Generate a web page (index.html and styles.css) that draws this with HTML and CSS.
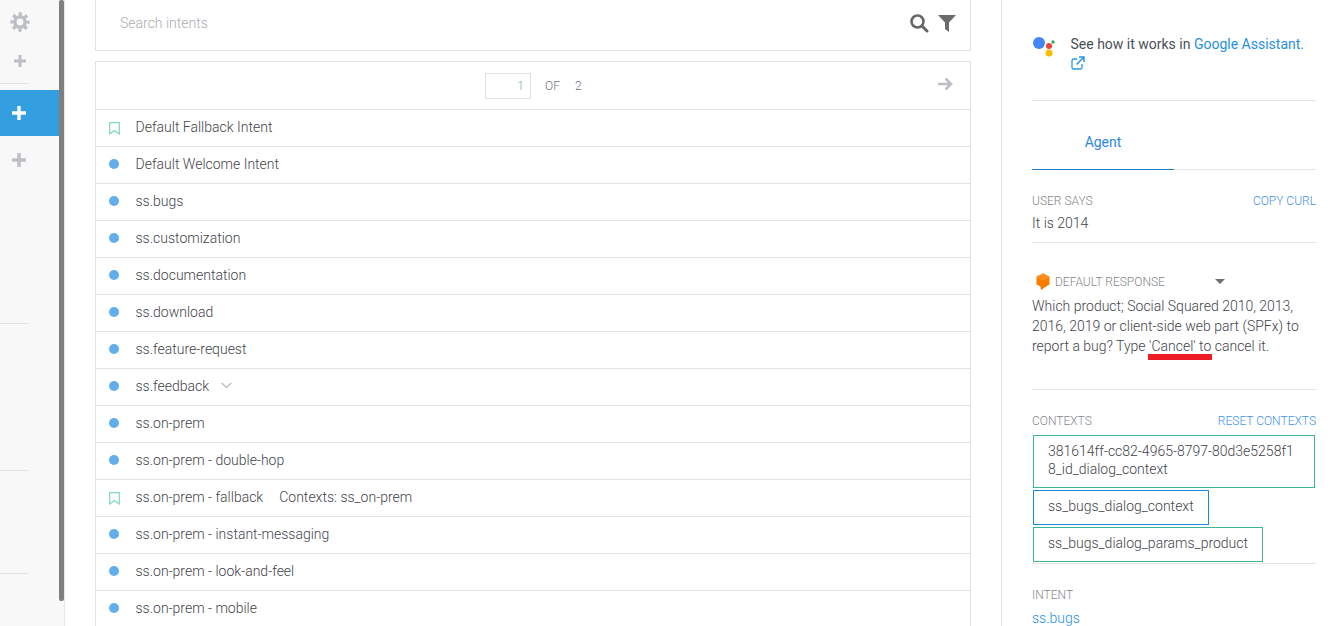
FILE: index.html
```html
<!DOCTYPE html>
<html lang="en">
<head>
<meta charset="utf-8">
<title>Intents</title>
<link rel="stylesheet" href="styles.css">
</head>
<body>
<div class="app">
  <aside class="sidebar">
    <div class="side-top">
      <svg class="gear" width="22" height="22" viewBox="0 0 22 22"><circle cx="11" cy="11" r="5.2" fill="none" stroke="#bcbfc4" stroke-width="3.6"/><circle cx="11" cy="11" r="8" fill="none" stroke="#bcbfc4" stroke-width="3.4" stroke-dasharray="3.2 3.08" stroke-dashoffset="1.6"/></svg>
      <svg class="plus" width="14" height="14" viewBox="0 0 14 14"><path d="M7 1v12M1 7h12" stroke="#bcbfc4" stroke-width="3"/></svg>
    </div>
    <div class="side-line"></div>
    <div class="side-active"><svg width="16" height="16" viewBox="0 0 16 16"><path d="M8 1v14M1 8h14" stroke="#fff" stroke-width="3.4"/></svg></div>
    <div class="side-add"><svg width="16" height="16" viewBox="0 0 16 16"><path d="M8 1v14M1 8h14" stroke="#bcbfc4" stroke-width="3.4"/></svg></div>
    <div class="side-line line-a"></div>
    <div class="side-line line-b"></div>
    <div class="side-line line-c"></div>
    <div class="scrollbar"></div>
  </aside>

  <main class="main">
    <div class="search">
      <span class="search-text">Search intents</span>
      <svg width="20" height="20" viewBox="0 0 20 20"><circle cx="8.5" cy="8.5" r="6" fill="none" stroke="#666" stroke-width="2.6"/><path d="M13 13l5 5" stroke="#666" stroke-width="3" stroke-linecap="round"/></svg>
      <svg width="18" height="18" viewBox="0 0 18 18"><path d="M0 1h18l-7 7.5V18l-4-3V8.500z" fill="#6b6b6b"/></svg>
    </div>
    <section class="list">
      <div class="pager">
        <span class="page-input">1</span>
        <span class="page-of">OF</span>
        <span class="page-total">2</span>
        <svg class="page-next" width="16" height="14" viewBox="0 0 16 14"><path d="M1 7h13M8.500 1.500L14 7l-5.500 5.500" fill="none" stroke="#bcc0c6" stroke-width="2.600"/></svg>
      </div>
      <div class="row"><svg class="mark" width="11" height="13" viewBox="0 0 11 13"><path d="M.7.700h9.600v11.300L5.500 8.500.7 12z" fill="none" stroke="#7fd8bb" stroke-width="1.200"/></svg><span>Default Fallback Intent</span></div>
      <div class="row"><i class="dot"></i><span>Default Welcome Intent</span></div>
      <div class="row"><i class="dot"></i><span>ss.bugs</span></div>
      <div class="row"><i class="dot"></i><span>ss.customization</span></div>
      <div class="row"><i class="dot"></i><span>ss.documentation</span></div>
      <div class="row"><i class="dot"></i><span>ss.download</span></div>
      <div class="row"><i class="dot"></i><span>ss.feature-request</span></div>
      <div class="row"><i class="dot"></i><span>ss.feedback</span><svg class="chev" width="11" height="7" viewBox="0 0 11 7"><path d="M.7 1l4.800 4.500L10.300 1" fill="none" stroke="#b5b9be" stroke-width="1.200"/></svg></div>
      <div class="row"><i class="dot"></i><span>ss.on-prem</span></div>
      <div class="row"><i class="dot"></i><span>ss.on-prem - double-hop</span></div>
      <div class="row"><svg class="mark" width="11" height="13" viewBox="0 0 11 13"><path d="M.7.700h9.600v11.300L5.500 8.500.7 12z" fill="none" stroke="#7fd8bb" stroke-width="1.200"/></svg><span>ss.on-prem - fallback</span><span class="ctx">Contexts: ss_on-prem</span></div>
      <div class="row"><i class="dot"></i><span>ss.on-prem - instant-messaging</span></div>
      <div class="row"><i class="dot"></i><span>ss.on-prem - look-and-feel</span></div>
      <div class="row"><i class="dot"></i><span>ss.on-prem - mobile</span></div>
    </section>
  </main>

  <aside class="panel">
    <div class="assistant">
      <svg class="ga" width="24" height="24" viewBox="0 0 24 24"><circle cx="7" cy="8" r="6" fill="#4285f4"/><circle cx="17" cy="11" r="3" fill="#ea4335"/><circle cx="21" cy="7" r="1.700" fill="#34a853"/><circle cx="17" cy="18" r="3.500" fill="#fbbc05"/></svg>
      <p class="assistant-text">See how it works in <a class="link">Google Assistant</a><span class="link">.</span><br>
        <svg class="ext" width="14" height="14" viewBox="0 0 14 14"><path d="M11 8v3.500a1.500 1.500 0 0 1-1.500 1.500h-7A1.500 1.500 0 0 1 1 11.500v-7A1.500 1.500 0 0 1 2.500 3H6" fill="none" stroke="#2a97e6" stroke-width="1.300"/><path d="M5.500 8.500L12.500 1.500M8 1h5v5" fill="none" stroke="#2a97e6" stroke-width="1.500"/></svg>
      </p>
    </div>
    <div class="tabs"><div class="tab">Agent</div></div>
    <div class="block says">
      <div class="head"><span class="label">USER SAYS</span><a class="action">COPY CURL</a></div>
      <div class="value"><span>It is 2014</span></div>
    </div>
    <div class="block response">
      <div class="resp-head">
        <svg width="14" height="17" viewBox="0 0 14 17"><path d="M7 1.200l5.800 3v7L8 14l-2.500 2-.5-3.200-3.800-1.600v-7z" fill="#f57c00" stroke="#f57c00" stroke-width="1.400" stroke-linejoin="round"/><path d="M1.200 4.200L7 7l5.800-2.800L7 1.200z" fill="#ff8f1a" stroke="#ff8f1a" stroke-width="1" stroke-linejoin="round"/></svg>
        <span class="label">DEFAULT RESPONSE</span>
        <i class="caret"></i>
      </div>
      <p class="resp-text">Which product; Social Squared 2010, 2013, 2016, 2019 or client-side web part (SPFx) to report a bug? Type 'Cancel' to cancel it.</p>
      <div class="redline"></div>
    </div>
    <div class="block contexts">
      <div class="head"><span class="label">CONTEXTS</span><a class="action">RESET CONTEXTS</a></div>
      <div class="ctx-list">
        <div class="chip green wide">381614ff-cc82-4965-8797-80d3e5258f18_id_dialog_context</div>
        <div class="chip blue">ss_bugs_dialog_context</div>
        <div class="chip green">ss_bugs_dialog_params_product</div>
      </div>
    </div>
    <div class="intent">
      <div class="label">INTENT</div>
      <a class="link intent-name">ss.bugs</a>
    </div>
  </aside>
</div>
</body>
</html>
```
FILE: styles.css
```css
* { box-sizing: border-box; }
html, body { margin: 0; height: 626px; overflow: hidden; background: #fff; }
body { font-family: Roboto, "Liberation Sans", sans-serif; font-size: 14px; font-weight: 300; color: #3f444b; }
.app { display: flex; height: 626px; overflow: hidden; }

.sidebar { position: relative; flex: 0 0 65px; height: 626px; background: #f8f8f8; border-right: 1px solid #e8e8e8; }
.side-top { height: 83px; width: 40px; display: flex; flex-direction: column; align-items: center; padding-top: 11px; gap: 21px; }
.side-line { width: 29px; height: 1px; background: #e4e4e4; }
.side-active { margin-top: 6px; height: 46px; width: 59px; background: #339fe0; display: flex; align-items: center; padding-left: 11px; }
.side-add { height: 48px; width: 38px; display: flex; align-items: center; justify-content: center; }
.line-a { margin-top: 139px; }
.line-b { margin-top: 146px; }
.line-c { margin-top: 102px; }
.scrollbar { position: absolute; left: 59px; top: 0; width: 5px; height: 601px; background: #7f7f7f; border-radius: 2px; }

.main { flex: 0 0 937px; padding: 0 30px; border-right: 1px solid #e4e4e4; height: 626px; overflow: hidden; }
.search { height: 51px; border: 2px solid #e2e2e2; border-width: 0 1px 1px 1px; display: flex; align-items: center; gap: 9px; padding: 0 14px 5px 24px; }
.search-text { flex: 1; color: #a9adb3; font-size: 14px; }
.list { margin-top: 10px; border: 1px solid #e2e2e2; border-bottom: 0; }
.pager { height: 47px; display: flex; align-items: center; padding-left: 389px; padding-right: 17px; padding-top: 1px; border-bottom: 0; font-size: 12px; }
.page-input { width: 46px; height: 26px; border: 1px solid #e2e2e2; text-align: right; padding-right: 6px; line-height: 24px; font-size: 12px; color: #7f9fa6; }
.page-of { margin-left: 14px; color: #70757c; }
.page-total { margin-left: 15px; color: #6d7383; flex: 1; }
.page-next { margin-bottom: 5px; }
.row { height: 37px; border-top: 1px solid #e2e2e2; display: flex; align-items: center; padding-left: 13px; padding-bottom: 3px; }
.dot { width: 10px; height: 10px; border-radius: 50%; background: #62aeec; margin-right: 16.5px; margin-top: 1px; flex: none; }
.mark { margin-right: 15.5px; margin-top: 4px; flex: none; }
.chev { margin-left: 12px; }
.ctx { margin-left: 16px; }

.panel { flex: 1; position: relative; padding: 0 19px 0 30px; height: 626px; overflow: hidden; }
.assistant { height: 101px; display: flex; border-bottom: 1px solid #e4e4e4; padding-top: 34px; }
.ga { margin-right: 14.5px; margin-top: 1px; flex: none; }
.assistant-text { margin: 0; line-height: 20px; font-size: 14px; font-weight: 400; color: #4a4f56; }
.link { color: #1f8fe3; }
.ext { vertical-align: -1px; }
.tabs { height: 69px; border-bottom: 1px solid #e4e4e4; display: flex; }
.tab { width: 142px; height: 69px; border-bottom: 1px solid #1b7dc8; text-align: center; color: #2a88df; line-height: 83px; font-weight: 400; }
.label { font-size: 12px; color: #83878c; }
.action { font-size: 12px; color: #3f93e8; }
.head { display: flex; justify-content: space-between; }
.says { height: 73px; padding-top: 24px; border-bottom: 1px solid #e4e4e4; }
.value { margin-top: 5px; line-height: 20px; }
.response { position: relative; height: 147px; padding-top: 30px; border-bottom: 1px solid #e4e4e4; }
.resp-head { display: flex; align-items: center; padding-left: 4px; height: 17px; }
.resp-head .label { margin-left: 5px; }
.caret { margin-left: 50px; width: 0; height: 0; border: 5px solid transparent; border-top-color: #6f6f6f; border-bottom: 0; }
.resp-text { margin: 6px 0 0; line-height: 20px; }
.redline { position: absolute; left: 116px; top: 111px; width: 64px; height: 6px; background: #ed1c24; }
.contexts { height: 174px; padding-top: 24px; border-bottom: 1px solid #e4e4e4; }
.ctx-list { margin-top: 7px; display: flex; flex-direction: column; gap: 2px; align-items: flex-start; padding-left: 1px; }
.chip { border: 1px solid; padding: 6px 14px 8px; line-height: 18px; height: 35px; }
.chip.wide { width: 282px; height: 53px; word-break: break-all; padding-right: 20px; }
.green { border-color: #3bb693; }
.blue { border-color: #1e88dc; }
.intent { padding-top: 24px; }
.intent-name { display: block; margin-top: 6px; line-height: 20px; }
```
